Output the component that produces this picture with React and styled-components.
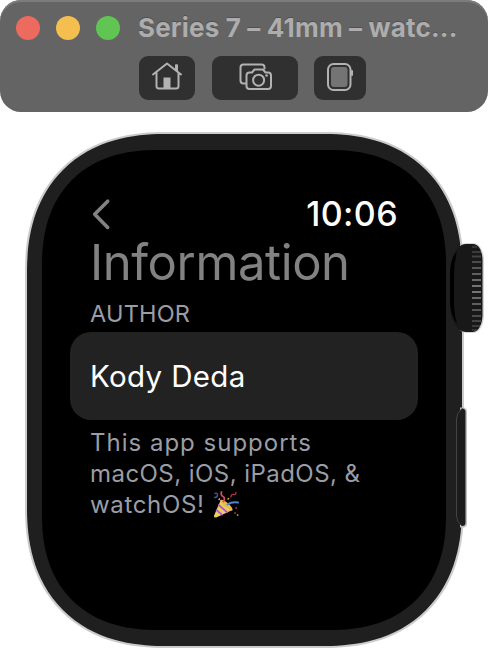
import React from "react";
import styled, { createGlobalStyle } from "styled-components";

const GlobalStyle = createGlobalStyle`
  * { box-sizing: border-box; }
  body { margin: 0; background: #fff; font-family: Inter, "Liberation Sans", sans-serif; }
`;

const Page = styled.main`
  width: 488px;
  height: 650px;
  overflow: hidden;
`;

const TitleBar = styled.header`
  height: 112px;
  border-radius: 21px;
  background: #646464;
  box-shadow: inset 0 2px 0 #7c7c7c;
`;

const TitleRow = styled.div`
  display: flex;
  align-items: center;
  height: 56px;
  padding-left: 16px;
`;

const Lights = styled.div`
  display: flex;
  gap: 16px;
  width: 122px;
`;

const Light = styled.span`
  width: 24px;
  height: 24px;
  border-radius: 50%;
  background: ${(p) => p.$color};
`;

const WindowTitle = styled.h1`
  margin: -1px 0 0;
  font-size: 26px;
  line-height: 32px;
  font-weight: 700;
  letter-spacing: 0.17px;
  white-space: nowrap;
  color: #adadad;
  text-shadow: 0 -1px 0 #505050;
`;

const Tools = styled.nav`
  display: flex;
  padding-left: 139px;
`;

const ToolButton = styled.button`
  display: flex;
  width: ${(p) => p.$width}px;
  height: 44px;
  margin: 0 ${(p) => p.$after || 0}px 0 0;
  padding: 0;
  border: 0;
  border-radius: 9px;
  background: #303030;
`;

const Icon = styled.svg`
  display: block;
  flex: none;
  fill: none;
  stroke: #b2b2b2;
  stroke-width: 2;
  stroke-linecap: round;
  stroke-linejoin: round;
`;

const Watch = styled.section`
  position: relative;
  width: 439px;
  height: 516px;
  margin: 20px 0 0 25px;
  padding: 16px;
  border: 2px solid #cbcbcb;
  border-radius: 127px;
  background: #1f1f1f;

  @supports (corner-shape: superellipse(1.2)) {
    border-radius: 140px;
    corner-shape: superellipse(1.2);
  }
`;

const Screen = styled.div`
  width: 404px;
  height: 480px;
  margin-left: -1px;
  padding: 45px 28px 0 28px;
  border-radius: 101px;
  background: #000;

  @supports (corner-shape: superellipse(1.2)) {
    border-radius: 115px;
    corner-shape: superellipse(1.2);
  }
`;

const StatusRow = styled.div`
  display: flex;
  align-items: center;
  justify-content: space-between;
  height: 38px;
  padding: 0 20px 0 20px;
`;

const Clock = styled.time`
  font-size: 34px;
  line-height: 38px;
  font-weight: 500;
  letter-spacing: 0.4px;
  color: #fff;
`;

const Heading = styled.h2`
  height: 61px;
  margin: 0;
  padding-left: 20px;
  font-size: 49px;
  line-height: 60px;
  font-weight: 400;
  letter-spacing: -0.4px;
  color: #828282;
`;

const SectionLabel = styled.h3`
  height: 38px;
  margin: 0;
  padding-left: 20px;
  font-size: 23.5px;
  line-height: 40px;
  font-weight: 400;
  letter-spacing: 0.2px;
  color: #9a9da6;
`;

const Cell = styled.div`
  height: 88px;
  padding-left: 20px;
  border-radius: 21px;
  background: #222223;
  font-size: 29.5px;
  line-height: 89px;
  letter-spacing: 0.35px;
  color: #fff;
`;

const Footer = styled.p`
  margin: 7px 0 0;
  padding-left: 20px;
  font-size: 24px;
  line-height: 31px;
  color: #9a9da6;
`;

const FooterLine = styled.span`
  display: flex;
  align-items: center;
  height: 31px;
  white-space: nowrap;
  letter-spacing: ${(p) => p.$tracking}px;
`;

const Crown = styled.svg`
  position: absolute;
  left: 421px;
  top: 108px;
`;

const SideButton = styled.svg`
  position: absolute;
  left: 428px;
  top: 272px;
`;

function HomeIcon() {
  return (
    <Icon width="56" height="44">
      <path d="M14 18.5 28 7.5 42 18.5M17.5 16.5V30q0 2.5 2.5 2.5h17q2.5 0 2.5-2.5V16.5M37.5 14V9.5" />
      <path d="M24.5 32V21.5h7V32z" fill="#b2b2b2" stroke="none" />
      <path d="M36 8.5h3v7l-3-2z" fill="#b2b2b2" stroke="none" />
    </Icon>
  );
}

function CamerasIcon() {
  return (
    <Icon width="86" height="44">
      <path d="M34 27.5h-2.5q-3 0-3-3v-13q0-3 3-3h18q3 0 3 3v1" />
      <path d="M37.5 16.5h2.5l2.5-3h8.5l2.5 3h2.5q3 0 3 3V30q0 3-3 3h-18.5q-3 0-3-3V19.5q0-3 3-3z" />
      <circle cx="46.6" cy="24.2" r="5.5" />
      <circle cx="54.6" cy="19.5" r="1.3" fill="#b2b2b2" stroke="none" />
    </Icon>
  );
}

function WatchIcon() {
  return (
    <Icon width="52" height="44">
      <rect x="14" y="8" width="22.5" height="26" rx="5.5" />
      <rect x="17" y="11" width="16.5" height="20" rx="3" fill="#747474" stroke="none" />
      <path d="M38 15v4" />
    </Icon>
  );
}

function BackIcon() {
  return (
    <svg width="22" height="32" fill="none" stroke="#828282" strokeWidth="3.6" strokeLinecap="round" strokeLinejoin="round">
      <path d="M17.7 3.2 4.7 16.2 17.7 29.4" />
    </svg>
  );
}

function PartyPopper() {
  return (
    <svg width="30" height="28" viewBox="-1 0 30 28" role="img" aria-label="Party popper" fill="none" strokeLinecap="round">
      <path d="M7.5 9.5 1.2 24.2q-.8 2.5 2 2.2L19.5 19z" fill="#efcd62" />
      <path d="M3.6 19.3 9 23.6M5.8 14 14 21.2M8 9.8 18.5 18.8" stroke="#a95acb" strokeWidth="1.8" />
      <ellipse cx="13.4" cy="14" rx="2.4" ry="7.6" transform="rotate(-50 13.4 14)" fill="#e8bd50" />
      <path d="M2 2.5q2.5-1 2.5 1.5t-3 2.5" stroke="#355b9a" strokeWidth="1.4" />
      <path d="M8.5 1q-1 3.5 1.5 4.5t.5 5" stroke="#d34b5d" strokeWidth="1.8" />
      <path d="M14.5 13.5q4-3 10.5-2" stroke="#4f84d1" strokeWidth="2" />
      <path d="M18 6q0-3 2.5-2.5t2.5-2" stroke="#a83a48" strokeWidth="1.3" />
      <path d="M6 8.5l.6-.6M15 8l.6-.6" stroke="#e6ba47" strokeWidth="1.4" />
      <path d="M23 17h.2M22 22h.2" stroke="#d94f70" strokeWidth="1.6" />
      <path d="M24.5 24h.2" stroke="#e6c553" strokeWidth="1.6" />
    </svg>
  );
}

function DigitalCrown() {
  const ridges = [5, 10, 14.5, 20, 26, 32, 38, 44, 50, 56, 62, 68, 74, 79, 84, 88];
  return (
    <Crown width="40" height="94" viewBox="0 0 40 94" aria-hidden="true">
      <path d="M12 3Q15 1 18 1H25C32 1 36 10 36 18V73C36 82 32 91 25 91H18Q15 91 12 88Z" fill="#d4d4d4" />
      <path d="M18 2H25C31 2 34.5 10 34.5 18V73C34.5 81 31 90 25 90H18C9 90 2 77 2 62V32C2 15 9 2 18 2Z" fill="#181818" />
      <path d="M9 9C4 15 2 23 2 32V62Q3 74 9 82Q6 72 6 60V34Q6 20 9 9Z" fill="#000" />
      {ridges.map((y) => (
        <path key={y} d={`M24 ${y}h${y < 8 || y > 85 ? 5 : 9}`} stroke="#fff" strokeOpacity={0.08 + 0.34 * (1 - Math.abs(y - 47) / 47)} strokeWidth="2" />
      ))}
    </Crown>
  );
}

function FrameButton() {
  return (
    <SideButton width="14" height="124" viewBox="0 0 14 124" aria-hidden="true">
      <path d="M5 1.5H8Q12 1.5 12 6V117Q12 121.5 8 121.5H5Z" fill="#bfbfbf" />
      <path d="M7 2.5Q10.5 2.5 10.5 6V117Q10.5 120 7 120Q1.5 116 1.5 110V13Q1.5 7 7 2.5Z" fill="#1c1c1c" />
      <path d="M7 2.5Q1.5 7 1.5 13V110Q1.5 116 7 120" fill="none" stroke="#444" />
    </SideButton>
  );
}

export default function App() {
  return (
    <Page>
      <GlobalStyle />
      <TitleBar>
        <TitleRow>
          <Lights>
            <Light $color="#ed6a5e" />
            <Light $color="#f5bf4f" />
            <Light $color="#61c554" />
          </Lights>
          <WindowTitle>Series 7 – 41mm – watc...</WindowTitle>
        </TitleRow>
        <Tools>
          <ToolButton $width={56} $after={17} aria-label="Home"><HomeIcon /></ToolButton>
          <ToolButton $width={86} $after={16} aria-label="Screenshot"><CamerasIcon /></ToolButton>
          <ToolButton $width={52} aria-label="Watch"><WatchIcon /></ToolButton>
        </Tools>
      </TitleBar>
      <Watch>
        <Screen>
          <StatusRow>
            <BackIcon />
            <Clock>10:06</Clock>
          </StatusRow>
          <Heading>Information</Heading>
          <SectionLabel>AUTHOR</SectionLabel>
          <Cell>Kody Deda</Cell>
          <Footer>
            <FooterLine $tracking={1}>This app supports</FooterLine>
            <FooterLine $tracking={0.45}>macOS, iOS, iPadOS, &amp;</FooterLine>
            <FooterLine $tracking={0.65}>watchOS!&nbsp;<PartyPopper /></FooterLine>
          </Footer>
        </Screen>
        <DigitalCrown />
        <FrameButton />
      </Watch>
    </Page>
  );
}
